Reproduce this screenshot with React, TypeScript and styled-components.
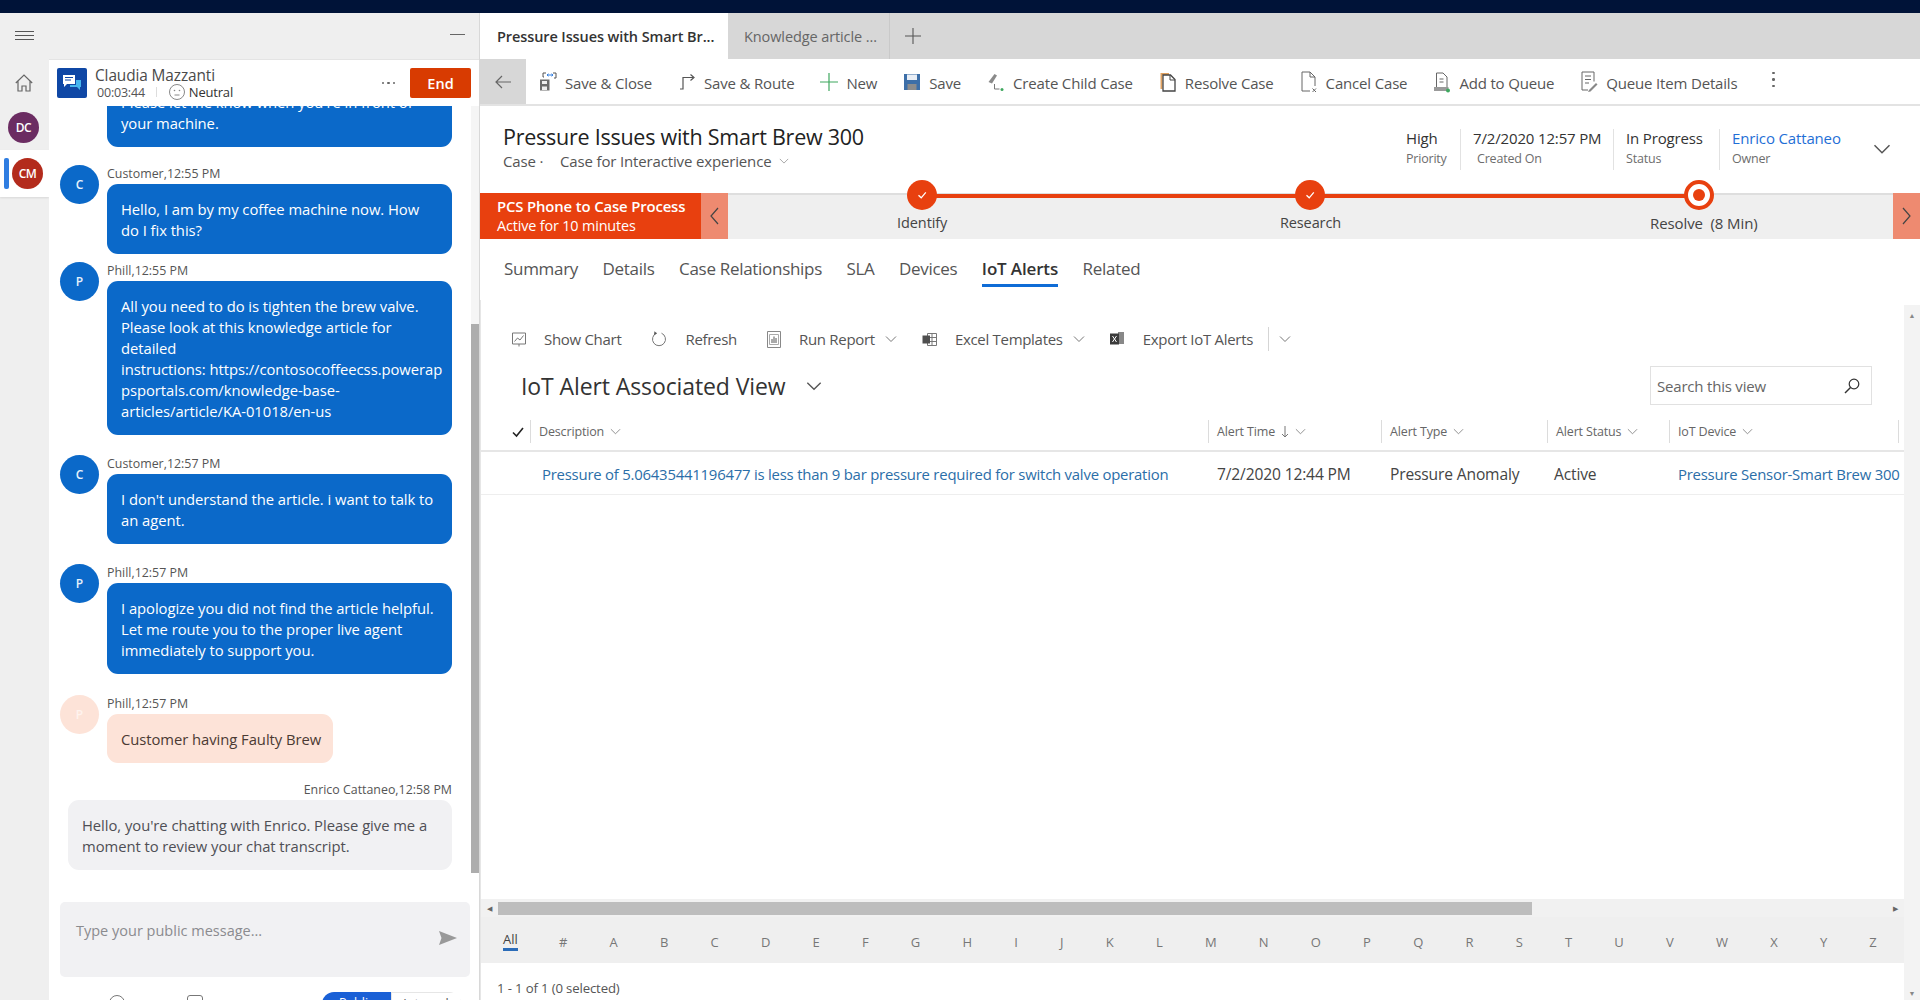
import React from "react";
import styled, { createGlobalStyle } from "styled-components";

const FONT = `"Open Sans", "Noto Sans", "Liberation Sans", sans-serif`;

const GlobalStyle = createGlobalStyle`
  html, body {
    margin: 0;
    padding: 0;
    width: 1920px;
    height: 1000px;
    overflow: hidden;
    background: #fff;
    font-family: ${FONT};
  }
  * {
    box-sizing: border-box;
  }
`;

const Page = styled.div`
  display: flex;
  flex-direction: column;
  width: 1920px;
  height: 1000px;
  overflow: hidden;
`;

const TopBar = styled.div`
  height: 13px;
  flex-shrink: 0;
  background: #001338;
`;

const Workspace = styled.div`
  display: flex;
  flex: 1;
  min-height: 0;
`;

/* left rail */
const Rail = styled.nav`
  display: flex;
  flex-direction: column;
  width: 49px;
  flex-shrink: 0;
  background: #efefef;
`;

const RailIcon = styled.div`
  display: flex;
  justify-content: center;
  height: ${(p: { $h: number }) => p.$h}px;
  padding-right: 1px;
  padding-top: 18px;
`;

const Avatar = styled.div<{ $bg: string }>`
  display: flex;
  align-items: center;
  justify-content: center;
  width: 31px;
  height: 31px;
  border-radius: 50%;
  background: ${(p) => p.$bg};
  color: #fff;
  font-size: 12px;
  font-weight: 600;
  letter-spacing: -0.5px;
`;

const RailSession = styled.div<{ $active?: boolean }>`
  display: flex;
  align-items: center;
  height: ${(p) => (p.$active ? 47 : 46)}px;
  padding-left: ${(p) => (p.$active ? 4 : 8)}px;
  background: ${(p) => (p.$active ? "#fff" : "transparent")};
  box-shadow: ${(p) => (p.$active ? "0 1px 2px rgba(0,0,0,0.1)" : "none")};
`;

const ActiveMark = styled.span`
  width: 5px;
  height: 31px;
  margin-right: 3px;
  border-radius: 2px;
  background: #2f7de1;
`;

/* chat panel */
const ChatPanel = styled.section`
  display: flex;
  flex-direction: column;
  width: 431px;
  flex-shrink: 0;
  background: #fff;
  border-right: 1px solid #d8d8d8;
`;

const ChatTop = styled.div`
  display: flex;
  align-items: center;
  justify-content: flex-end;
  height: 47px;
  flex-shrink: 0;
  padding-right: 14px;
  background: #efefef;
  border-bottom: 1px solid #e4e4e4;
`;

const Minimize = styled.span`
  width: 15px;
  height: 1.5px;
  margin-bottom: 3px;
  background: #666;
`;

const ConvoHeader = styled.div`
  display: flex;
  align-items: center;
  height: 46px;
  flex-shrink: 0;
  padding: 0 8px;
  background: #fff;
  position: relative;
  z-index: 1;
`;

const ChannelIcon = styled.div`
  display: flex;
  align-items: center;
  justify-content: center;
  width: 30px;
  height: 30px;
  border-radius: 2px;
  background: #0f47a5;
`;

const ConvoInfo = styled.div`
  display: flex;
  flex-direction: column;
  margin-left: 8px;
  padding-top: 1px;
  color: #4a4a4a;
`;

const ConvoName = styled.div`
  font-size: 15.4px;
  line-height: 17px;
  letter-spacing: -0.1px;
`;

const ConvoMeta = styled.div`
  display: flex;
  align-items: center;
  gap: 4px;
  margin-left: 2px;
  height: 16px;
  font-size: 12.5px;
  letter-spacing: -0.2px;
  color: #555;
`;

const MetaSep = styled.span`
  width: 1px;
  height: 10px;
  margin: 0 8px 0 7px;
  background: #ddd;
`;

const MetaStrong = styled.span`
  font-size: 13px;
  color: #333;
`;

const MoreDots = styled.span`
  margin-left: auto;
  margin-right: 15px;
  display: flex;
  gap: 3px;
`;

const Dot = styled.i`
  width: 2.5px;
  height: 2.5px;
  border-radius: 50%;
  background: #666;
`;

const EndButton = styled.button`
  width: 61px;
  height: 30px;
  border: none;
  border-radius: 2px;
  background: #d83b01;
  color: #fff;
  font-family: ${FONT};
  font-size: 14.5px;
  font-weight: 600;
`;

const ChatBody = styled.div`
  display: flex;
  height: 767px;
  flex-shrink: 0;
  overflow: hidden;
`;

const Messages = styled.div`
  display: flex;
  flex-direction: column;
  flex: 1;
  min-width: 0;
  padding: 0 19px 0 11px;
`;

const ChatScroll = styled.div`
  width: 8px;
  flex-shrink: 0;
  background: #f5f5f5;
`;

const ChatThumb = styled.div`
  height: 549px;
  margin-top: 218px;
  background: #adadad;
`;

const MessageRow = styled.div<{ $top: number }>`
  display: flex;
  gap: 8px;
  margin-top: ${(p) => p.$top}px;
  flex-shrink: 0;
`;

const MsgAvatar = styled.div<{ $pale?: boolean }>`
  display: flex;
  align-items: center;
  justify-content: center;
  width: 39px;
  height: 39px;
  flex-shrink: 0;
  border-radius: 50%;
  background: ${(p) => (p.$pale ? "#fde3d8" : "#0b69c9")};
  color: ${(p) => (p.$pale ? "#fff3ee" : "#e8f2fb")};
  font-size: 12px;
  font-weight: 600;
`;

const MsgColumn = styled.div<{ $own?: boolean }>`
  display: flex;
  flex-direction: column;
  align-items: ${(p) => (p.$own ? "flex-end" : "flex-start")};
  width: ${(p) => (p.$own ? 384 : 345)}px;
  margin-left: ${(p) => (p.$own ? 8 : 0)}px;
`;

const MsgAuthor = styled.div`
  height: 19px;
  padding-top: 1px;
  font-size: 12.4px;
  line-height: 16px;
  color: #555;
`;

const Bubble = styled.div<{ $kind: "blue" | "peach" | "grey" }>`
  padding: 15px 0 13px 14px;
  border-radius: 11px;
  font-size: 14.8px;
  line-height: 21px;
  letter-spacing: -0.05px;
  white-space: pre-line;
  width: ${(p) => (p.$kind === "peach" ? "226px" : "100%")};
  background: ${(p) =>
    p.$kind === "blue" ? "#0b69c9" : p.$kind === "peach" ? "#fde3d8" : "#f1f1f3"};
  color: ${(p) => (p.$kind === "blue" ? "#fff" : p.$kind === "peach" ? "#4b3a33" : "#4f4f55")};
`;

const Composer = styled.div`
  display: flex;
  justify-content: space-between;
  height: 75px;
  flex-shrink: 0;
  margin: 29px 9px 0 11px;
  padding: 19px 13px 0 16px;
  border-radius: 5px;
  background: #f1f1f3;
  color: #8b8b8f;
  font-size: 14.5px;
  line-height: 20px;
`;

const SendIcon = styled.span`
  padding-top: 10px;
`;

const ComposerFoot = styled.div`
  display: flex;
  align-items: flex-start;
  flex: 1;
  padding: 15px 18px 0 60px;
  overflow: hidden;
`;

const FootIcon = styled.span`
  width: 16px;
  height: 16px;
  margin-top: 3px;
  margin-right: 62px;
  border: 1px solid #777;
  border-radius: ${(p: { $round?: boolean }) => (p.$round ? "50%" : "3px")};
`;

const ReplyToggle = styled.div`
  display: flex;
  margin-left: auto;
  height: 30px;
  border-radius: 12px;
  overflow: hidden;
  font-size: 12.5px;
`;

const ReplyOption = styled.div<{ $on?: boolean }>`
  width: ${(p) => (p.$on ? 69 : 70)}px;
  padding-top: 2px;
  text-align: center;
  background: ${(p) => (p.$on ? "#1a60d6" : "#fff")};
  color: ${(p) => (p.$on ? "#fff" : "#555")};
  border: ${(p) => (p.$on ? "none" : "1px solid #e6e6e6")};
`;

/* main side */
const Main = styled.main`
  display: flex;
  flex-direction: column;
  flex: 1;
  min-width: 0;
`;

const SessionTabs = styled.div`
  display: flex;
  align-items: center;
  height: 46px;
  flex-shrink: 0;
  background: #d7d7d7;
`;

const SessionTab = styled.div<{ $active?: boolean }>`
  display: flex;
  align-items: center;
  height: 100%;
  width: ${(p) => (p.$active ? 248 : 162)}px;
  padding-left: ${(p) => (p.$active ? 17 : 16)}px;
  background: ${(p) => (p.$active ? "#fff" : "transparent")};
  border-right: ${(p) => (p.$active ? "none" : "1px solid #c9c9c9")};
  color: ${(p) => (p.$active ? "#333" : "#666")};
  font-size: 14.5px;
  letter-spacing: -0.1px;
  font-weight: ${(p) => (p.$active ? 600 : 400)};
`;

const AddTab = styled.span`
  display: flex;
  margin-left: 15px;
`;

const CommandBar = styled.div`
  display: flex;
  align-items: center;
  height: 47px;
  flex-shrink: 0;
  border-bottom: 2px solid #e3e3e3;
  background: #fff;
`;

const BackButton = styled.div`
  display: flex;
  align-items: center;
  justify-content: center;
  width: 46px;
  height: 100%;
  margin-right: 13px;
  background: #d7d7d7;
`;

const Command = styled.div`
  display: flex;
  align-items: center;
  gap: 8px;
  margin-right: 26px;
  color: #555;
  font-size: 15px;
  line-height: 20px;
  letter-spacing: -0.17px;
  white-space: nowrap;
`;

const CommandLabel = styled.span`
  padding-top: 3px;
`;

const KebabDots = styled.span`
  display: flex;
  flex-direction: column;
  gap: 4px;
  margin: 0 0 4px 9px;
`;

const FormHeader = styled.header`
  display: flex;
  height: 87px;
  flex-shrink: 0;
  padding: 16px 29px 0 23px;
  background: #fff;
`;

const TitleBlock = styled.div`
  display: flex;
  flex-direction: column;
`;

const FormTitle = styled.h1`
  margin: 0;
  font-size: 21.5px;
  font-weight: 500;
  line-height: 30px;
  letter-spacing: -0.25px;
  color: #222;
`;

const FormSub = styled.div`
  display: flex;
  align-items: center;
  height: 17px;
  font-size: 15px;
  letter-spacing: -0.15px;
  color: #555;
`;

const FormType = styled.span`
  width: 57px;
`;

const SubChevron = styled.span`
  display: flex;
  margin-left: 8px;
`;

const HeaderFields = styled.div`
  display: flex;
  align-items: flex-start;
  margin-left: auto;
  padding-top: 7px;
`;

const Field = styled.div<{ $w: number; $first?: boolean }>`
  display: flex;
  flex-direction: column;
  width: ${(p) => p.$w}px;
  height: 41px;
  padding-left: ${(p) => (p.$first ? 0 : 12)}px;
  border-left: ${(p) => (p.$first ? "none" : "1px solid #e2e2e2")};
`;

const FieldValue = styled.div<{ $link?: boolean }>`
  font-size: 15px;
  font-weight: 500;
  line-height: 19px;
  letter-spacing: -0.15px;
  white-space: nowrap;
  color: ${(p) => (p.$link ? "#1f6fd6" : "#333")};
`;

const FieldLabel = styled.div<{ $indent?: number }>`
  font-size: 12.5px;
  line-height: 21px;
  letter-spacing: -0.2px;
  color: #6d6d6d;
  margin-left: ${(p) => p.$indent || 0}px;
`;

const HeaderChevron = styled.span`
  display: flex;
  margin: 11px 0 0 14px;
`;

const ProcessBar = styled.div`
  display: flex;
  height: 46px;
  flex-shrink: 0;
  background: #efefef;
`;

const ProcessName = styled.div`
  display: flex;
  flex-direction: column;
  justify-content: center;
  width: 221px;
  padding-left: 17px;
  background: #e8400f;
  color: #fff;
  font-size: 14.4px;
  line-height: 20px;
  letter-spacing: -0.15px;
`;

const ProcessStrong = styled.strong`
  font-size: 14.9px;
  font-weight: 600;
`;

const ProcessArrow = styled.div`
  display: flex;
  align-items: center;
  justify-content: center;
  width: 27px;
  flex-shrink: 0;
  background: #ee8a70;
`;

const Stages = styled.div`
  display: grid;
  grid-template-columns: repeat(3, 1fr);
  flex: 1;
  position: relative;
  border-top: 2px solid #dedede;

  &::before {
    content: "";
    position: absolute;
    left: 194px;
    right: 194px;
    top: -1px;
    height: 4px;
    background: #e8400f;
  }
`;

const Stage = styled.div`
  display: flex;
  flex-direction: column;
  align-items: center;
  position: relative;
  margin-top: -15px;
  color: #444;
  font-size: 14.5px;
  line-height: 20px;
  letter-spacing: -0.1px;
`;

const StageDot = styled.span<{ $current?: boolean }>`
  display: flex;
  align-items: center;
  justify-content: center;
  width: 30px;
  height: 30px;
  margin-bottom: 3px;
  border-radius: 50%;
  background: ${(p) => (p.$current ? "#fff" : "#e8400f")};
  border: ${(p) => (p.$current ? "4px solid #e8400f" : "none")};
`;

const CurrentCore = styled.span`
  width: 12px;
  height: 12px;
  border-radius: 50%;
  background: #e8400f;
`;

const StageLabel = styled.span<{ $shift?: number; $wide?: boolean }>`
  margin-left: ${(p) => p.$shift || 0}px;
  font-size: ${(p) => (p.$wide ? 15 : 14.5)}px;
  white-space: pre;
`;

const FormTabs = styled.div`
  display: flex;
  gap: 24.5px;
  height: 61px;
  flex-shrink: 0;
  padding: 18px 0 0 24px;
  background: #fff;
`;

const FormTab = styled.div<{ $active?: boolean }>`
  height: 30px;
  font-size: 17px;
  line-height: 24px;
  letter-spacing: ${(p) => (p.$active ? "-0.15px" : "-0.3px")};
  color: ${(p) => (p.$active ? "#333" : "#555")};
  font-weight: ${(p) => (p.$active ? 600 : 400)};
  border-bottom: 3px solid ${(p) => (p.$active ? "#0f6cd6" : "transparent")};
`;

const Content = styled.div`
  display: flex;
  flex: 1;
  min-height: 0;
`;

const Grid = styled.div`
  display: flex;
  flex-direction: column;
  flex: 1;
  min-width: 0;
  border-left: 1px solid #e6e6e6;
`;

const VScroll = styled.div`
  display: flex;
  flex-direction: column;
  align-items: center;
  justify-content: space-between;
  width: 16px;
  margin-top: 5px;
  flex-shrink: 0;
  padding: 6px 0 2px;
  background: #f3f3f3;
  color: #888;
  font-size: 7px;
`;

const SubToolbar = styled.div`
  display: flex;
  align-items: center;
  height: 40px;
  flex-shrink: 0;
  margin-top: 19px;
  padding-left: 31px;
`;

const SubCommand = styled.div`
  display: flex;
  align-items: center;
  gap: 18px;
  margin-right: 30px;
  color: #555;
  font-size: 15px;
  letter-spacing: -0.3px;
  white-space: nowrap;
`;

const SubChev = styled.span`
  display: flex;
  margin: 0 25px 0 -20px;
`;

const SubDivider = styled.span`
  width: 1px;
  height: 24px;
  margin: 0 10px 0 -15px;
  background: #d5d5d5;
`;

const ViewRow = styled.div`
  display: flex;
  align-items: center;
  justify-content: space-between;
  height: 39px;
  flex-shrink: 0;
  margin-top: 7px;
  padding: 0 32px 0 40px;
`;

const ViewTitle = styled.div`
  display: flex;
  align-items: center;
  gap: 20px;
  font-size: 23px;
  letter-spacing: -0.1px;
  color: #333;
`;

const SearchBox = styled.div`
  display: flex;
  align-items: center;
  justify-content: space-between;
  width: 222px;
  height: 39px;
  padding: 0 11px 0 6px;
  border: 1px solid #e1e1e1;
  color: #666;
  font-size: 15px;
  letter-spacing: -0.2px;
`;

const COLUMNS = "27px 678px 173px 166px 122px 229px 6px";

const HeaderRow = styled.div`
  display: grid;
  grid-template-columns: ${COLUMNS};
  align-items: center;
  height: 39px;
  flex-shrink: 0;
  margin-top: 8px;
  padding-left: 22px;
  border-bottom: 2px solid #e6e6e6;
`;

const CheckCell = styled.div`
  display: flex;
  justify-content: center;
  padding-left: 2px;
`;

const HeadCell = styled.div`
  display: flex;
  align-items: center;
  gap: 6px;
  height: 23px;
  padding-left: 8px;
  border-left: 1px solid #dcdcdc;
  color: #666;
  font-size: 12.5px;
  letter-spacing: -0.15px;
`;

const DataRow = styled.div`
  display: grid;
  grid-template-columns: ${COLUMNS};
  align-items: center;
  height: 43px;
  flex-shrink: 0;
  padding: 1px 0 0 22px;
  border-bottom: 1px solid #eeeeee;
`;

const DataCell = styled.div<{ $link?: boolean; $pad?: number }>`
  padding-left: ${(p) => p.$pad ?? 9}px;
  font-size: ${(p) => (p.$link ? 14.9 : 15.6)}px;
  letter-spacing: ${(p) => (p.$link ? "-0.22px" : "-0.15px")};
  white-space: nowrap;
  color: ${(p) => (p.$link ? "#2b6ea8" : "#444")};
`;

const GridSpacer = styled.div`
  flex: 1;
`;

const HScroll = styled.div`
  display: flex;
  align-items: center;
  justify-content: space-between;
  height: 18px;
  flex-shrink: 0;
  padding-right: 6px;
  background: #f1f1f1;
  color: #666;
  font-size: 7px;
`;

const HArrow = styled.span`
  width: 17px;
  text-align: center;
`;

const HThumb = styled.div`
  width: 1034px;
  height: 13px;
  margin-right: auto;
  background: #bdbdbd;
`;

const Jump = styled.div`
  display: flex;
  align-items: center;
  height: 46px;
  flex-shrink: 0;
  padding: 4px 0 0 22px;
  background: #efefef;
  color: #777;
  font-size: 13px;
`;

const JumpLetter = styled.span`
  flex-shrink: 0;
  padding: 0 21.1px;
  color: #777;
`;

const AllMark = styled.span`
  display: inline-block;
  margin: -2px 20px 0 0;
  border-bottom: 3px solid #2b6cb8;
  line-height: 17px;
  color: #444;
`;

const FooterBar = styled.div`
  display: flex;
  align-items: center;
  height: 37px;
  flex-shrink: 0;
  padding: 12px 0 0 16px;
  color: #555;
  font-size: 13.2px;
  letter-spacing: -0.15px;
`;

const Glyph = styled.svg`
  display: block;
  flex-shrink: 0;
`;

const Chevron = ({ size = 12, color = "#777", w = 1 }: { size?: number; color?: string; w?: number }) => (
  <Glyph width={size} height={size} viewBox="0 0 12 12" fill="none">
    <path d="M1 3.5 6 8.5 11 3.5" stroke={color} strokeWidth={w} />
  </Glyph>
);

const Check = () => (
  <Glyph width="14" height="14" viewBox="0 0 14 14" fill="none">
    <path d="M3.5 7.2 6.2 9.8 10.8 4.4" stroke="#fff" strokeWidth="1.3" />
  </Glyph>
);

const SaveCloseIcon = () => (
  <Glyph width="18" height="22" viewBox="0 0 18 22" fill="none">
    <path d="M1 8.5h9.5v11H1z" fill="#6b6b6b" />
    <path d="M3 10h5v3H3zM3 15.500h5V19H3z" fill="#eee" />
    <path d="M5 2h2M5 6H4V2h1M14 2h3v5h-2" stroke="#555" />
    <path d="M8 4h6M9.500 2.800 8 4l1.500 1.200M12.500 2.800 14 4l-1.500 1.200" stroke="#2f7de1" />
  </Glyph>
);

const RouteIcon = () => (
  <Glyph width="18" height="20" viewBox="0 0 18 20" fill="none">
    <path d="M2 17h3V5.500h10" stroke="#555" strokeWidth="1.2" />
    <path d="M12.500 2.500 16 5.500l-3.500 3" stroke="#555" strokeWidth="1.2" />
  </Glyph>
);

const PlusIcon = ({ color = "#3fa85f", size = 18 }: { color?: string; size?: number }) => (
  <Glyph width={size} height={size} viewBox="0 0 18 18" fill="none">
    <path d="M9 0v18M0 9h18" stroke={color} strokeWidth="1.2" />
  </Glyph>
);

const SaveIcon = () => (
  <Glyph width="18" height="18" viewBox="0 0 18 18" fill="none">
    <path d="M1 1h16v16H1z" fill="#3d6fa8" />
    <path d="M4 1.500h10V7H4z" fill="#e9eef5" />
    <path d="M4.500 11h9v6h-9z" fill="#8c8c8c" />
  </Glyph>
);

const ChildIcon = () => (
  <Glyph width="18" height="22" viewBox="0 0 18 22" fill="none">
    <path d="M1.500 11 7.500 3l2.500 1.500-5 8z" fill="#8a8a8a" />
    <path d="M7.500 13v5h5" stroke="#777" />
    <circle cx="15" cy="18.500" r="1.500" fill="#3fa85f" />
  </Glyph>
);

const ResolveIcon = () => (
  <Glyph width="18" height="22" viewBox="0 0 18 22" fill="none">
    <path d="M1.500 2H10v2H3.500v14H1.500z" fill="#e0a160" />
    <path d="M4 4h7.500L16 8.500V20H4z" stroke="#444" strokeWidth="1.3" />
    <path d="M11 4v5h5" stroke="#444" />
  </Glyph>
);

const CancelIcon = () => (
  <Glyph width="18" height="24" viewBox="0 0 18 24" fill="none">
    <path d="M2 21V2h8l5 5v9M2 21h8" stroke="#666" />
    <path d="M10 2v5h5" stroke="#666" />
    <path d="M12.500 18.500 16 22M16 18.500 12.500 22" stroke="#666" />
  </Glyph>
);

const QueueIcon = () => (
  <Glyph width="18" height="24" viewBox="0 0 18 24" fill="none">
    <path d="M3.500 17V3h6.500l4 4v10" stroke="#666" />
    <path d="M6.500 9h4M6.500 12h4" stroke="#666" />
    <path d="M1 17h14.500v4H1z" fill="#9a9a9a" />
    <circle cx="15" cy="20.500" r="2" fill="#3fa85f" />
  </Glyph>
);

const QueueItemIcon = () => (
  <Glyph width="18" height="24" viewBox="0 0 18 24" fill="none">
    <path d="M2 2h12v9.500M2 2v18h6" stroke="#666" />
    <path d="M5 6h6M5 9.500h6M5 13h4" stroke="#666" />
    <path d="M9 20l7-7 1.500 1.500-7 7-2.500.5z" fill="#888" />
  </Glyph>
);

const ChartIcon = () => (
  <Glyph width="14" height="15" viewBox="0 0 14 15" fill="none">
    <path d="M.5 1h13v11H.5z" stroke="#777" />
    <path d="M2.500 9.500 5.500 6l2.500 2L11.500 3.500M7 12v2.500" stroke="#777" />
  </Glyph>
);

const RefreshIcon = () => (
  <Glyph width="16" height="18" viewBox="0 0 16 18" fill="none">
    <path d="M5.500 3.200A6.500 6.500 0 1 0 10.500 3.200" stroke="#777" />
    <path d="M3.500 1.200 6 3.500 3 5" fill="#555" />
  </Glyph>
);

const ReportIcon = () => (
  <Glyph width="14" height="17" viewBox="0 0 14 17" fill="none">
    <path d="M.5.500h13v16H.5z" stroke="#888" />
    <path d="M2.500 3.500h9v10h-9z" stroke="#aaa" />
    <path d="M5 12V8M7 12V5.500M9 12V7" stroke="#555" />
  </Glyph>
);

const ExcelIcon = () => (
  <Glyph width="15" height="15" viewBox="0 0 15 15" fill="none">
    <path d="M5.500 1.500H14.500V13.500H5.500z" stroke="#777" />
    <path d="M5.500 5.500h9M5.500 9.500h9M10 1.500v12" stroke="#777" />
    <path d="M.5 3.500H8v8H.5z" fill="#4f4f4f" />
  </Glyph>
);

const ExportIcon = () => (
  <Glyph width="15" height="16" viewBox="0 0 15 16" fill="none">
    <path d="M8 1h6v12H8z" fill="#888" />
    <path d="M0 2.500h9v11H0z" fill="#3a3a3a" />
    <path d="M2.500 5 6.500 11M6.500 5 2.500 11" stroke="#fff" />
  </Glyph>
);

const commands: { label: string; icon: React.ReactNode }[] = [
  { label: "Save & Close", icon: <SaveCloseIcon /> },
  { label: "Save & Route", icon: <RouteIcon /> },
  { label: "New", icon: <PlusIcon /> },
  { label: "Save", icon: <SaveIcon /> },
  { label: "Create Child Case", icon: <ChildIcon /> },
  { label: "Resolve Case", icon: <ResolveIcon /> },
  { label: "Cancel Case", icon: <CancelIcon /> },
  { label: "Add to Queue", icon: <QueueIcon /> },
  { label: "Queue Item Details", icon: <QueueItemIcon /> },
];

const letters = "#ABCDEFGHIJKLMNOPQRSTUVWXYZ".split("");
const tabs = ["Summary", "Details", "Case Relationships", "SLA", "Devices", "IoT Alerts", "Related"];

// line breaks are kept as in the transcript, the long url wraps mid-word there
const messages = [
  { top: -48, who: "C", author: "Customer,12:53 PM", text: "Please let me know when you're in front of\nyour machine." },
  { top: 18, who: "C", author: "Customer,12:55 PM", text: "Hello, I am by my coffee machine now. How\ndo I fix this?" },
  {
    top: 8,
    who: "P",
    author: "Phill,12:55 PM",
    text: "All you need to do is tighten the brew valve.\nPlease look at this knowledge article for\ndetailed\ninstructions: https://contosocoffeecss.powerap\npsportals.com/knowledge-base-\narticles/article/KA-01018/en-us",
  },
  { top: 20, who: "C", author: "Customer,12:57 PM", text: "I don't understand the article. i want to talk to\nan agent." },
  {
    top: 20,
    who: "P",
    author: "Phill,12:57 PM",
    text: "I apologize you did not find the article helpful.\nLet me route you to the proper live agent\nimmediately to support you.",
  },
];

const App: React.FC = () => {
  return (
    <Page>
      <GlobalStyle />
      <TopBar />
      <Workspace>
        <Rail>
          <RailIcon $h={47}>
            <Glyph width="19" height="10" viewBox="0 0 19 10" fill="none">
              <path d="M0 .5h19M0 4.500h19M0 8.500h19" stroke="#555" />
            </Glyph>
          </RailIcon>
          <RailIcon $h={44}>
            <Glyph width="18" height="18" viewBox="0 0 18 18" fill="none" style={{ marginTop: -4 }}>
              <path d="M.8 9 9 1l8.200 8M3 7v10h4v-5h4v5h4V7" stroke="#666" strokeWidth="1.2" />
            </Glyph>
          </RailIcon>
          <RailSession>
            <Avatar $bg="#6b2c62">DC</Avatar>
          </RailSession>
          <RailSession $active>
            <ActiveMark />
            <Avatar $bg="#b32b1c">CM</Avatar>
          </RailSession>
        </Rail>

        <ChatPanel>
          <ChatTop>
            <Minimize />
          </ChatTop>
          <ConvoHeader>
            <ChannelIcon>
              <Glyph width="20" height="18" viewBox="0 0 20 18" fill="none">
                <path d="M1 1h12v9H5l-3 3v-3H1z" fill="#fff" />
                <path d="M3 3.500h8M3 6h6" stroke="#0f47a5" />
                <path d="M14 6h5v7h-1v3l-3-3H8v-2h6z" fill="#45b6ee" />
              </Glyph>
            </ChannelIcon>
            <ConvoInfo>
              <ConvoName>Claudia Mazzanti</ConvoName>
              <ConvoMeta>
                00:03:44
                <MetaSep />
                <Glyph width="16" height="16" viewBox="0 0 16 16" fill="none">
                  <circle cx="8" cy="8" r="7.500" stroke="#888" />
                  <circle cx="5.500" cy="6.500" r=".8" fill="#888" />
                  <circle cx="10.500" cy="6.500" r=".8" fill="#888" />
                  <path d="M5.500 11h5" stroke="#888" />
                </Glyph>
                <MetaStrong>Neutral</MetaStrong>
              </ConvoMeta>
            </ConvoInfo>
            <MoreDots>
              <Dot />
              <Dot />
              <Dot />
            </MoreDots>
            <EndButton>End</EndButton>
          </ConvoHeader>
          <ChatBody>
            <Messages>
              {messages.map((m) => (
                <MessageRow $top={m.top} key={m.author + m.top}>
                  <MsgAvatar>{m.who}</MsgAvatar>
                  <MsgColumn>
                    <MsgAuthor>{m.author}</MsgAuthor>
                    <Bubble $kind="blue">{m.text}</Bubble>
                  </MsgColumn>
                </MessageRow>
              ))}
              <MessageRow $top={21}>
                <MsgAvatar $pale>P</MsgAvatar>
                <MsgColumn>
                  <MsgAuthor>Phill,12:57 PM</MsgAuthor>
                  <Bubble $kind="peach">Customer having Faulty Brew</Bubble>
                </MsgColumn>
              </MessageRow>
              <MessageRow $top={18}>
                <MsgColumn $own>
                  <MsgAuthor>Enrico Cattaneo,12:58 PM</MsgAuthor>
                  <Bubble $kind="grey">
                    {"Hello, you're chatting with Enrico. Please give me a\nmoment to review your chat transcript."}
                  </Bubble>
                </MsgColumn>
              </MessageRow>
            </Messages>
            <ChatScroll>
              <ChatThumb />
            </ChatScroll>
          </ChatBody>
          <Composer>
            Type your public message...
            <SendIcon>
              <Glyph width="18" height="14" viewBox="0 0 18 14">
                <path d="M0 0 18 7 0 14 2.500 7z" fill="#999" />
              </Glyph>
            </SendIcon>
          </Composer>
          <ComposerFoot>
            <FootIcon $round />
            <FootIcon />
            <ReplyToggle>
              <ReplyOption $on>Public</ReplyOption>
              <ReplyOption>Internal</ReplyOption>
            </ReplyToggle>
          </ComposerFoot>
        </ChatPanel>

        <Main>
          <SessionTabs>
            <SessionTab $active>Pressure Issues with Smart Br...</SessionTab>
            <SessionTab>Knowledge article ...</SessionTab>
            <AddTab>
              <PlusIcon color="#555" size={16} />
            </AddTab>
          </SessionTabs>
          <CommandBar>
            <BackButton>
              <Glyph width="16" height="14" viewBox="0 0 16 14" fill="none">
                <path d="M16 7H1M7 1 1 7l6 6" stroke="#666" strokeWidth="1.2" />
              </Glyph>
            </BackButton>
            {commands.map((c) => (
              <Command key={c.label}>
                {c.icon}
                <CommandLabel>{c.label}</CommandLabel>
              </Command>
            ))}
            <KebabDots>
              <Dot />
              <Dot />
              <Dot />
            </KebabDots>
          </CommandBar>
          <FormHeader>
            <TitleBlock>
              <FormTitle>Pressure Issues with Smart Brew 300</FormTitle>
              <FormSub>
                <FormType>Case ·</FormType>
                Case for Interactive experience
                <SubChevron>
                  <Chevron size={10} color="#999" />
                </SubChevron>
              </FormSub>
            </TitleBlock>
            <HeaderFields>
              <Field $w={54} $first>
                <FieldValue>High</FieldValue>
                <FieldLabel>Priority</FieldLabel>
              </Field>
              <Field $w={153}>
                <FieldValue>7/2/2020 12:57 PM</FieldValue>
                <FieldLabel $indent={4}>Created On</FieldLabel>
              </Field>
              <Field $w={106}>
                <FieldValue>In Progress</FieldValue>
                <FieldLabel>Status</FieldLabel>
              </Field>
              <Field $w={140}>
                <FieldValue $link>Enrico Cattaneo</FieldValue>
                <FieldLabel>Owner</FieldLabel>
              </Field>
              <HeaderChevron>
                <Chevron size={18} color="#555" />
              </HeaderChevron>
            </HeaderFields>
          </FormHeader>
          <ProcessBar>
            <ProcessName>
              <ProcessStrong>PCS Phone to Case Process</ProcessStrong>
              Active for 10 minutes
            </ProcessName>
            <ProcessArrow>
              <Glyph width="9" height="18" viewBox="0 0 9 18" fill="none">
                <path d="M8 1 1 9l7 8" stroke="#444" strokeWidth="1.2" />
              </Glyph>
            </ProcessArrow>
            <Stages>
              <Stage>
                <StageDot>
                  <Check />
                </StageDot>
                <StageLabel>Identify</StageLabel>
              </Stage>
              <Stage>
                <StageDot>
                  <Check />
                </StageDot>
                <StageLabel>Research</StageLabel>
              </Stage>
              <Stage>
                <StageDot $current>
                  <CurrentCore />
                </StageDot>
                <StageLabel $shift={10} $wide>
                  Resolve  (8 Min)
                </StageLabel>
              </Stage>
            </Stages>
            <ProcessArrow>
              <Glyph width="9" height="18" viewBox="0 0 9 18" fill="none">
                <path d="M1 1l7 8-7 8" stroke="#444" strokeWidth="1.2" />
              </Glyph>
            </ProcessArrow>
          </ProcessBar>
          <FormTabs>
            {tabs.map((t) => (
              <FormTab $active={t === "IoT Alerts"} key={t}>
                {t}
              </FormTab>
            ))}
          </FormTabs>
          <Content>
            <Grid>
              <SubToolbar>
                <SubCommand>
                  <ChartIcon />
                  Show Chart
                </SubCommand>
                <SubCommand>
                  <RefreshIcon />
                  Refresh
                </SubCommand>
                <SubCommand>
                  <ReportIcon />
                  Run Report
                </SubCommand>
                <SubChev>
                  <Chevron />
                </SubChev>
                <SubCommand>
                  <ExcelIcon />
                  Excel Templates
                </SubCommand>
                <SubChev>
                  <Chevron />
                </SubChev>
                <SubCommand>
                  <ExportIcon />
                  Export IoT Alerts
                </SubCommand>
                <SubDivider />
                <Chevron />
              </SubToolbar>
              <ViewRow>
                <ViewTitle>
                  IoT Alert Associated View
                  <Chevron size={16} color="#555" />
                </ViewTitle>
                <SearchBox>
                  Search this view
                  <Glyph width="16" height="16" viewBox="0 0 16 16" fill="none">
                    <circle cx="10" cy="6" r="4.800" stroke="#333" strokeWidth="1.2" />
                    <path d="M6.500 9.500 1 15" stroke="#333" strokeWidth="1.4" />
                  </Glyph>
                </SearchBox>
              </ViewRow>
              <HeaderRow>
                <CheckCell>
                  <Glyph width="12" height="12" viewBox="0 0 12 12" fill="none">
                    <path d="M1 6.500 4.500 10 11 2" stroke="#222" strokeWidth="1.6" />
                  </Glyph>
                </CheckCell>
                <HeadCell>
                  Description <Chevron size={11} color="#888" />
                </HeadCell>
                <HeadCell>
                  Alert Time
                  <Glyph width="8" height="12" viewBox="0 0 8 12" fill="none">
                    <path d="M4 0v11M1 8l3 3 3-3" stroke="#777" />
                  </Glyph>
                  <Chevron size={11} color="#888" />
                </HeadCell>
                <HeadCell>
                  Alert Type <Chevron size={11} color="#888" />
                </HeadCell>
                <HeadCell>
                  Alert Status <Chevron size={11} color="#888" />
                </HeadCell>
                <HeadCell>
                  IoT Device <Chevron size={11} color="#888" />
                </HeadCell>
                <HeadCell />
              </HeaderRow>
              <DataRow>
                <span />
                <DataCell $link $pad={12}>
                  Pressure of 5.06435441196477 is less than 9 bar pressure required for switch valve operation
                </DataCell>
                <DataCell>7/2/2020 12:44 PM</DataCell>
                <DataCell>Pressure Anomaly</DataCell>
                <DataCell $pad={7}>Active</DataCell>
                <DataCell $link>Pressure Sensor-Smart Brew 300</DataCell>
              </DataRow>
              <GridSpacer />
              <HScroll>
                <HArrow>◀</HArrow>
                <HThumb />
                ▶
              </HScroll>
              <Jump>
                <AllMark>All</AllMark>
                {letters.map((l) => (
                  <JumpLetter key={l}>{l}</JumpLetter>
                ))}
              </Jump>
              <FooterBar>1 - 1 of 1 (0 selected)</FooterBar>
            </Grid>
            <VScroll>
              <span>▲</span>
              <span>▼</span>
            </VScroll>
          </Content>
        </Main>
      </Workspace>
    </Page>
  );
};

export default App;
